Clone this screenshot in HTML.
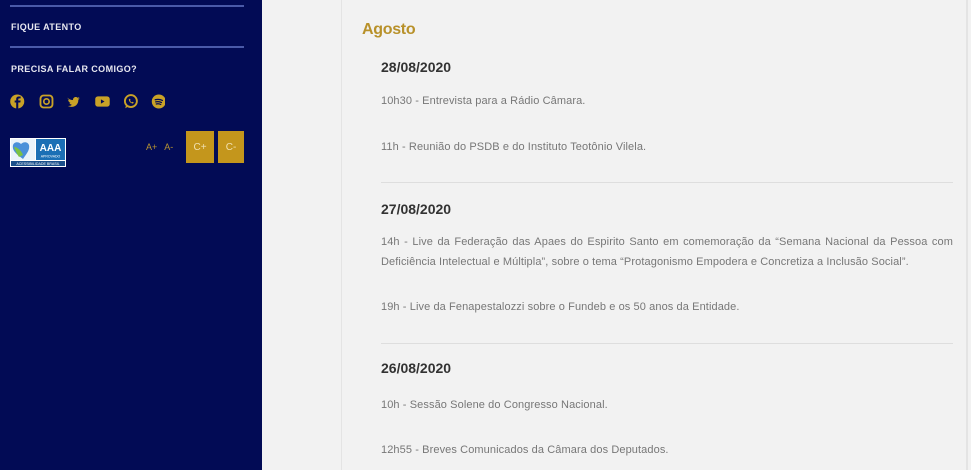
<!DOCTYPE html>
<html><head><meta charset="utf-8"><style>
*{margin:0;padding:0;box-sizing:border-box}
body{width:971px;height:470px;overflow:hidden;background:#f2f2f2;font-family:"Liberation Sans",sans-serif;position:relative}
.sb{position:absolute;left:0;top:0;width:262px;height:470px;background:#020b55}
.hr{position:absolute;left:10px;width:234px;height:2px;background:#4a5aa8}
.st{position:absolute;left:11px;color:#e8e8f0;font-size:9px;font-weight:bold;letter-spacing:.4px}
.ic{position:absolute;top:93px}
.box{position:absolute;top:131px;height:32px;background:#c4961c;color:#f0e0b0;font-size:10px;text-align:center;line-height:32px}
.main{position:absolute;left:341px;top:0;width:627px;height:470px;border-left:1px solid #e4e4e4;border-right:2px solid #e4e4e4;background:#f2f2f2}
.h{position:absolute;left:20px;top:21px;color:#b8912a;font-size:16px;font-weight:bold;letter-spacing:-.3px}
.d{position:absolute;left:39px;color:#333;font-size:14px;font-weight:bold}
.t{position:absolute;left:39px;color:#777;font-size:11px;width:572px;line-height:20px;letter-spacing:.1px}
.sep{position:absolute;left:39px;width:572px;height:1px;background:#dedede}
</style></head><body>
<div class="sb">
<div class="hr" style="top:5px"></div>
<div class="st" style="top:22px">FIQUE ATENTO</div>
<div class="hr" style="top:46px"></div>
<div class="st" style="top:64px">PRECISA FALAR COMIGO?</div>
<svg class="ic" style="left:10px" width="155" height="17" viewBox="0 0 150 16">
<circle cx="7" cy="8" r="6.8" fill="#c9a227"/><path d="M8 15V9h2l.3-2H8V6c0-.6.2-1 1-1h1.3V3.2H8.6C7 3.2 6 4 6 5.8V7H4.5v2H6v6z" fill="#020b55"/>
<rect x="29.5" y="2.2" width="11.6" height="11.6" rx="3" fill="none" stroke="#c9a227" stroke-width="1.8"/><circle cx="35.3" cy="8" r="2.6" fill="none" stroke="#c9a227" stroke-width="1.6"/>
<path d="M55 4c1.5 1.5 3.5 2.5 6 2.6-.3-2.4 2.6-3.9 4.3-2.2.7-.1 1.3-.4 1.8-.7-.2.7-.7 1.2-1.2 1.6.6-.1 1.1-.2 1.6-.5-.4.6-.9 1.1-1.4 1.5C66.4 11 62 15 56 12.3c1.5.1 3-.3 4-1.2-1.2 0-2.200-.8-2.6-1.9.4.1.8 0 1.1-.1-1.3-.3-2.2-1.4-2.2-2.7.4.2.8.3 1.2.3C56.3 5.9 55.9 4.8 55 4z" fill="#c9a227"/>
<rect x="82.5" y="3" width="14" height="10" rx="2.5" fill="#c9a227"/><path d="M88 6v4l3.5-2z" fill="#020b55"/>
<circle cx="117" cy="7.6" r="5.8" fill="none" stroke="#c9a227" stroke-width="1.8"/><path d="M111.5 14.5l1-3.5 2.3 1.8z" fill="#c9a227"/><path d="M115 6c0 2 2 4 4 4l.8-1-1.3-.7-.6.5c-.8-.3-1.4-1-1.7-1.7l.5-.6-.7-1.3z" fill="#c9a227"/>
<circle cx="144" cy="8" r="6.8" fill="#c9a227"/><path d="M140.5 6.3c2.5-.7 5-.4 7 .7M141 8.4c2-.5 4-.3 5.6.6M141.5 10.4c1.6-.4 3.2-.2 4.4.5" stroke="#020b55" stroke-width="1.2" fill="none" stroke-linecap="round"/>
</svg>
<svg style="position:absolute;left:10px;top:138px" width="56" height="29" viewBox="0 0 56 29">
<rect width="56" height="29" fill="#fff"/><rect x="1" y="1" width="24" height="21" fill="#eaf3fa"/>
<path d="M13 21C5 15 2 12 3 7c1-3 5-4 8-1 3-3 7-2 8 1 1 5-2 8-6 14z" fill="#4a90d9"/><path d="M4 9c3 0 7 3 9 8l-4 2C7 16 5 12 4 9z" fill="#7cc242"/>
<rect x="26" y="1" width="29" height="21" fill="#1b6fb5"/><text x="40.5" y="13" font-size="10" font-weight="bold" fill="#fff" text-anchor="middle" font-family="Liberation Sans">AAA</text><text x="40.5" y="19.5" font-size="3.5" fill="#fff" text-anchor="middle" font-family="Liberation Sans">APROVADO</text>
<rect x="1" y="23" width="54" height="5" fill="#1b4f8a"/><text x="28" y="27" font-size="3.6" fill="#fff" text-anchor="middle" font-family="Liberation Sans">ACESSIBILIDADE BRASIL</text>
</svg>
<div style="position:absolute;left:146px;top:142px;font-size:9px;color:#b89432">A+&nbsp;&nbsp; A-</div>
<div class="box" style="left:186px;width:28px;line-height:34px">C+</div>
<div class="box" style="left:218px;width:26px;line-height:34px">C-</div>
</div>
<div class="main">
<div class="h">Agosto</div>
<div class="d" style="top:59px">28/08/2020</div>
<div class="t" style="top:91px">10h30 - Entrevista para a Rádio Câmara.</div>
<div class="t" style="top:137px">11h - Reunião do PSDB e do Instituto Teotônio Vilela.</div>
<div class="sep" style="top:182px"></div>
<div class="d" style="top:201px">27/08/2020</div>
<div class="t" style="top:232px;text-align:justify;text-align-last:justify">14h - Live da Federação das Apaes do Espirito Santo em comemoração da “Semana Nacional da Pessoa com</div>
<div class="t" style="top:252px">Deficiência Intelectual e Múltipla”, sobre o tema “Protagonismo Empodera e Concretiza a Inclusão Social”.</div>
<div class="t" style="top:297px">19h - Live da Fenapestalozzi sobre o Fundeb e os 50 anos da Entidade.</div>
<div class="sep" style="top:343px"></div>
<div class="d" style="top:360px">26/08/2020</div>
<div class="t" style="top:395px">10h - Sessão Solene do Congresso Nacional.</div>
<div class="t" style="top:440px">12h55 - Breves Comunicados da Câmara dos Deputados.</div>
</div>
</body></html>
